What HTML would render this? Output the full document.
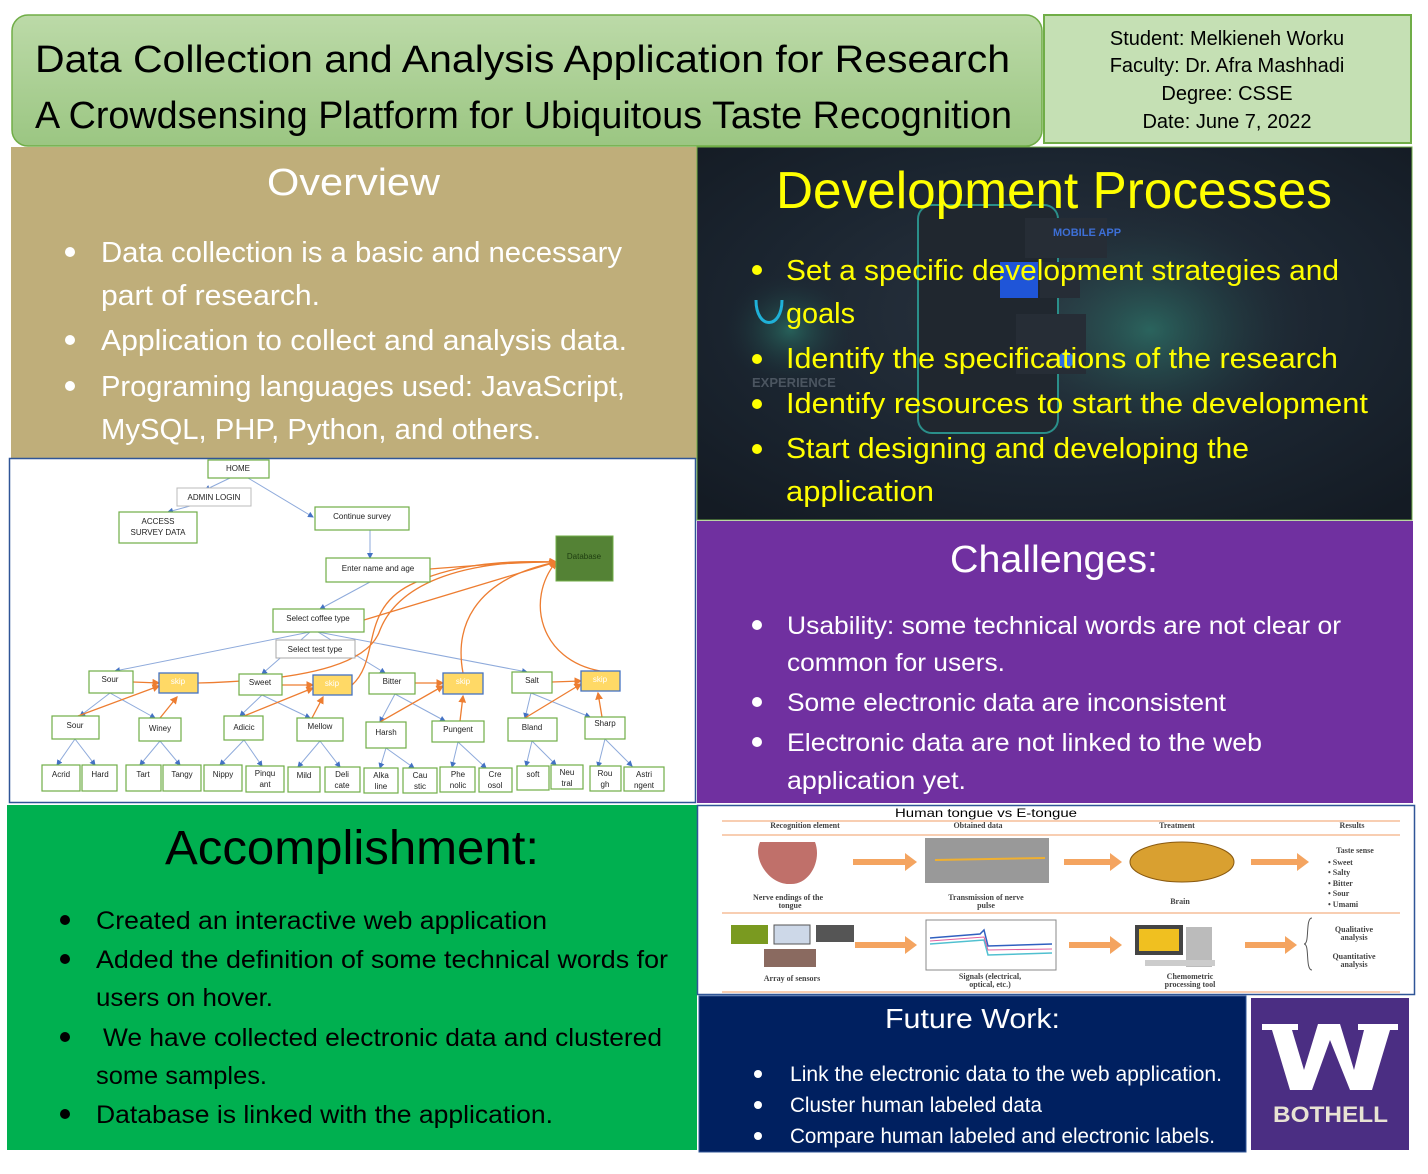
<!DOCTYPE html>
<html><head><meta charset="utf-8"><style>
html,body{margin:0;padding:0;background:#fff;}
svg{display:block;font-family:"Liberation Sans",sans-serif;}
</style></head><body>
<svg width="1428" height="1174" viewBox="0 0 1428 1174" xmlns="http://www.w3.org/2000/svg">
<defs>
<linearGradient id="tg" x1="0" y1="0" x2="0" y2="1"><stop offset="0" stop-color="#bcdaa8"/><stop offset="1" stop-color="#9bc682"/></linearGradient>
<radialGradient id="dv" cx="0.5" cy="0.45" r="0.7"><stop offset="0" stop-color="#2a3440"/><stop offset="0.6" stop-color="#1b2530"/><stop offset="1" stop-color="#141b24"/></radialGradient>
<radialGradient id="tl" cx="0.5" cy="0.5" r="0.5"><stop offset="0" stop-color="#2f8f7a" stop-opacity="0.55"/><stop offset="1" stop-color="#1b2530" stop-opacity="0"/></radialGradient>
<marker id="ab" markerWidth="6" markerHeight="6" refX="5" refY="3" orient="auto"><path d="M0,0 L6,3 L0,6z" fill="#4472c4"/></marker>
<marker id="ao" markerWidth="6" markerHeight="6" refX="5" refY="3" orient="auto"><path d="M0,0 L6,3 L0,6z" fill="#ed7d31"/></marker>
</defs>

<!-- Title -->
<rect x="12" y="15" width="1030" height="131" rx="16" fill="url(#tg)" stroke="#70ad47" stroke-width="1.5"/>
<text x="35" y="72" font-size="38" fill="#000" textLength="975" lengthAdjust="spacingAndGlyphs">Data Collection and Analysis Application for Research</text>
<text x="35" y="128" font-size="38" fill="#000" textLength="977" lengthAdjust="spacingAndGlyphs">A Crowdsensing Platform for Ubiquitous Taste Recognition</text>

<!-- Student -->
<rect x="1044" y="15" width="367" height="128" fill="#c5e0b4" stroke="#70ad47" stroke-width="2"/>
<g font-size="20" fill="#000" text-anchor="middle">
<text x="1227" y="45">Student: Melkieneh Worku</text>
<text x="1227" y="72">Faculty: Dr. Afra Mashhadi</text>
<text x="1227" y="100">Degree: CSSE</text>
<text x="1227" y="128">Date: June 7, 2022</text>
</g>

<!-- Overview -->
<rect x="11" y="147" width="686" height="312" fill="#bfae7a"/>
<text x="267" y="195" font-size="38" fill="#fff" textLength="173" lengthAdjust="spacingAndGlyphs">Overview</text>
<g fill="#fff" font-size="29">
<circle cx="70" cy="252" r="5"/><circle cx="70" cy="340" r="5"/><circle cx="70" cy="386" r="5"/>
<text x="101" y="262" textLength="521" lengthAdjust="spacingAndGlyphs">Data collection is a basic and necessary</text>
<text x="101" y="305" textLength="219" lengthAdjust="spacingAndGlyphs">part of research.</text>
<text x="101" y="350" textLength="526" lengthAdjust="spacingAndGlyphs">Application to collect and analysis data.</text>
<text x="101" y="396" textLength="524" lengthAdjust="spacingAndGlyphs">Programing languages used: JavaScript,</text>
<text x="101" y="439" textLength="440" lengthAdjust="spacingAndGlyphs">MySQL, PHP, Python, and others.</text>
</g>

<!-- Flowchart -->
<rect x="9.5" y="458.5" width="686" height="344" fill="#fff" stroke="#2f5597" stroke-width="1.5"/>
<g stroke="#8eaadb" stroke-width="1" fill="none" marker-end="url(#ab)">
<path d="M230,478 L205,490"/><path d="M190,506 L168,512"/><path d="M248,478 L313,517"/>
<path d="M370,530 L370,558"/><path d="M370,582 L320,609"/>
<path d="M310,632 L115,671"/><path d="M310,632 L262,674"/><path d="M318,632 L385,673"/><path d="M318,632 L527,672"/>
<path d="M110,693 L80,716"/><path d="M110,693 L155,718"/><path d="M262,695 L240,716"/><path d="M262,695 L310,718"/>
<path d="M395,694 L380,722"/><path d="M395,694 L445,721"/><path d="M531,693 L525,718"/><path d="M531,693 L590,717"/>
<path d="M75,739 L57,765"/><path d="M75,739 L95,765"/><path d="M160,741 L140,765"/><path d="M160,741 L180,765"/>
<path d="M244,740 L220,765"/><path d="M244,740 L262,766"/><path d="M320,741 L298,767"/><path d="M320,741 L340,767"/>
<path d="M386,748 L380,768"/><path d="M386,748 L414,768"/><path d="M458,742 L452,767"/><path d="M458,742 L486,768"/>
<path d="M532,741 L526,766"/><path d="M532,741 L556,765"/><path d="M605,739 L598,767"/><path d="M605,739 L632,766"/>
</g>
<g stroke="#ed7d31" stroke-width="1.3" fill="none" marker-end="url(#ao)">
<path d="M133,682 L159,683"/><path d="M282,685 L313,685"/><path d="M415,683 L443,683"/><path d="M552,682 L581,681"/>
<path d="M78,716 L159,686"/><path d="M160,718 L177,697"/><path d="M244,716 L313,688"/><path d="M312,718 L323,697"/>
<path d="M380,722 L443,686"/><path d="M460,721 L463,696"/><path d="M525,718 L581,684"/><path d="M602,717 L598,693"/>
<path d="M430,569 C480,565 520,562 556,562"/><path d="M364,620 L556,562"/>
<path d="M198,683 C320,680 370,660 380,630 C400,580 470,560 556,562"/>
<path d="M352,685 C380,660 360,610 410,585 C450,565 500,560 556,562"/>
<path d="M463,673 C455,630 470,580 556,562"/>
<path d="M600,671 C540,660 525,600 556,562"/>
</g>
<g font-size="8" fill="#222" text-anchor="middle">
<g fill="#fff" stroke="#70ad47" stroke-width="1.2">
<rect x="208" y="460" width="61" height="18"/><rect x="119" y="512" width="78" height="31"/><rect x="315" y="507" width="94" height="23"/>
<rect x="326" y="558" width="104" height="24"/><rect x="273" y="609" width="91" height="23"/>
<rect x="89" y="671" width="44" height="22"/><rect x="239" y="674" width="43" height="21"/><rect x="369" y="673" width="46" height="21"/><rect x="512" y="672" width="40" height="21"/>
<rect x="52" y="716" width="47" height="23"/><rect x="139" y="718" width="42" height="23"/><rect x="224" y="716" width="39" height="24"/><rect x="297" y="718" width="46" height="23"/>
<rect x="366" y="722" width="40" height="26"/><rect x="432" y="721" width="52" height="21"/><rect x="508" y="718" width="49" height="23"/><rect x="585" y="717" width="40" height="22"/>
<rect x="42" y="765" width="38" height="26"/><rect x="82" y="765" width="35" height="26"/><rect x="126" y="765" width="35" height="26"/><rect x="163" y="765" width="38" height="26"/>
<rect x="204" y="765" width="38" height="26"/><rect x="246" y="766" width="38" height="26"/><rect x="288" y="767" width="32" height="25"/><rect x="325" y="767" width="35" height="25"/>
<rect x="364" y="768" width="34" height="25"/><rect x="403" y="768" width="34" height="25"/><rect x="440" y="767" width="35" height="25"/><rect x="479" y="768" width="33" height="24"/>
<rect x="517" y="766" width="32" height="24"/><rect x="551" y="765" width="32" height="24"/><rect x="590" y="766" width="31" height="25"/><rect x="624" y="767" width="40" height="24"/>
</g>
<rect x="177" y="488" width="74" height="18" fill="#fff" stroke="#bbb"/><rect x="276" y="640" width="79" height="18" fill="#fff" stroke="#aaa"/>
<rect x="556" y="536" width="57" height="45" fill="#548235" stroke="#70ad47"/>
<g fill="#ffd966" stroke="#4472c4" stroke-width="1.3"><rect x="159" y="673" width="39" height="20"/><rect x="313" y="675" width="39" height="20"/><rect x="443" y="673" width="40" height="21"/><rect x="581" y="671" width="39" height="20"/></g>
<text x="238" y="471">HOME</text><text x="214" y="500">ADMIN LOGIN</text><text x="158" y="524">ACCESS</text><text x="158" y="535">SURVEY DATA</text>
<text x="362" y="519">Continue survey</text><text x="378" y="571">Enter name and age</text><text x="318" y="621">Select coffee type</text><text x="315" y="652">Select test type</text>
<text x="584" y="559" fill="#1e3d10">Database</text>
<text x="110" y="682">Sour</text><text x="260" y="685">Sweet</text><text x="392" y="684">Bitter</text><text x="532" y="683">Salt</text>
<g fill="#fff"><text x="178" y="684">skip</text><text x="332" y="686">skip</text><text x="463" y="684">skip</text><text x="600" y="682">skip</text></g>
<text x="75" y="728">Sour</text><text x="160" y="731">Winey</text><text x="244" y="730">Adicic</text><text x="320" y="729">Mellow</text>
<text x="386" y="735">Harsh</text><text x="458" y="732">Pungent</text><text x="532" y="730">Bland</text><text x="605" y="726">Sharp</text>
<text x="61" y="777">Acrid</text><text x="100" y="777">Hard</text><text x="143" y="777">Tart</text><text x="182" y="777">Tangy</text><text x="223" y="777">Nippy</text>
<text x="265" y="776">Pinqu</text><text x="265" y="787">ant</text><text x="304" y="778">Mild</text><text x="342" y="777">Deli</text><text x="342" y="788">cate</text>
<text x="381" y="778">Alka</text><text x="381" y="789">line</text><text x="420" y="778">Cau</text><text x="420" y="789">stic</text><text x="458" y="777">Phe</text><text x="458" y="788">nolic</text>
<text x="495" y="777">Cre</text><text x="495" y="788">osol</text><text x="533" y="777">soft</text><text x="567" y="775">Neu</text><text x="567" y="786">tral</text>
<text x="605" y="776">Rou</text><text x="605" y="787">gh</text><text x="644" y="777">Astri</text><text x="644" y="788">ngent</text>
</g>

<!-- Development -->
<rect x="697" y="147" width="715" height="373" fill="url(#dv)" stroke="#70ad47" stroke-width="1"/>
<ellipse cx="1150" cy="330" rx="170" ry="130" fill="url(#tl)"/>
<ellipse cx="790" cy="330" rx="70" ry="60" fill="url(#tl)"/>
<rect x="918" y="205" width="140" height="228" rx="14" fill="#20272f" stroke="#2a8f8a" stroke-width="2"/>
<rect x="1025" y="218" width="82" height="40" fill="#262d36"/>
<text x="1053" y="236" font-size="11" font-weight="bold" fill="#3d6fd6">MOBILE APP</text>
<rect x="1000" y="262" width="38" height="36" fill="#1f55d8"/>
<rect x="1040" y="262" width="40" height="36" fill="#262d36"/>
<rect x="1016" y="314" width="70" height="60" fill="#262d36"/>
<circle cx="1066" cy="360" r="8" fill="#2d6fe0"/>
<path d="M756,300 C756,330 782,330 782,300" stroke="#1fb1d8" stroke-width="3" fill="none"/>
<text x="752" y="387" font-size="13" font-weight="bold" fill="#4b5560">EXPERIENCE</text>
<text x="776" y="208" font-size="52" fill="#ffff00" textLength="556" lengthAdjust="spacingAndGlyphs">Development Processes</text>
<g fill="#ffff00" font-size="29">
<circle cx="757" cy="270" r="5"/><circle cx="757" cy="359" r="5"/><circle cx="757" cy="404" r="5"/><circle cx="757" cy="449" r="5"/>
<text x="786" y="280" textLength="553" lengthAdjust="spacingAndGlyphs">Set a specific development strategies and</text>
<text x="786" y="323" textLength="69" lengthAdjust="spacingAndGlyphs">goals</text>
<text x="786" y="368" textLength="552" lengthAdjust="spacingAndGlyphs">Identify the specifications of the research</text>
<text x="786" y="413" textLength="582" lengthAdjust="spacingAndGlyphs">Identify resources to start the development</text>
<text x="786" y="458" textLength="463" lengthAdjust="spacingAndGlyphs">Start designing and developing the</text>
<text x="786" y="501" textLength="148" lengthAdjust="spacingAndGlyphs">application</text>
</g>

<!-- Challenges -->
<rect x="697" y="521" width="716" height="282" fill="#7030a0"/>
<text x="950" y="572" font-size="38" fill="#fff" textLength="208" lengthAdjust="spacingAndGlyphs">Challenges:</text>
<g fill="#fff" font-size="25">
<circle cx="757" cy="625" r="5"/><circle cx="757" cy="702" r="5"/><circle cx="757" cy="742" r="5"/>
<text x="787" y="634" textLength="554" lengthAdjust="spacingAndGlyphs">Usability: some technical words are not clear or</text>
<text x="787" y="671" textLength="218" lengthAdjust="spacingAndGlyphs">common for users.</text>
<text x="787" y="711" textLength="439" lengthAdjust="spacingAndGlyphs">Some electronic data are inconsistent</text>
<text x="787" y="751" textLength="475" lengthAdjust="spacingAndGlyphs">Electronic data are not linked to the web</text>
<text x="787" y="789" textLength="179" lengthAdjust="spacingAndGlyphs">application yet.</text>
</g>

<!-- Accomplishment -->
<rect x="7" y="805" width="690" height="345" fill="#00b050"/>
<text x="165" y="864" font-size="48" fill="#000" textLength="374" lengthAdjust="spacingAndGlyphs">Accomplishment:</text>
<g fill="#000" font-size="25">
<circle cx="65" cy="920" r="5"/><circle cx="65" cy="959" r="5"/><circle cx="65" cy="1037" r="5"/><circle cx="65" cy="1114" r="5"/>
<text x="96" y="929" textLength="451" lengthAdjust="spacingAndGlyphs">Created an interactive web application</text>
<text x="96" y="968" textLength="572" lengthAdjust="spacingAndGlyphs">Added the definition of some technical words for</text>
<text x="96" y="1006" textLength="177" lengthAdjust="spacingAndGlyphs">users on hover.</text>
<text x="103" y="1046" textLength="559" lengthAdjust="spacingAndGlyphs">We have collected electronic data and clustered</text>
<text x="96" y="1084" textLength="171" lengthAdjust="spacingAndGlyphs">some samples.</text>
<text x="96" y="1123" textLength="457" lengthAdjust="spacingAndGlyphs">Database is linked with the application.</text>
</g>

<!-- Tongue diagram -->
<rect x="697.5" y="805.5" width="717" height="189" fill="#fff" stroke="#2f5597" stroke-width="1.5"/>
<g stroke="#f4b183" stroke-width="1.2"><line x1="722" y1="821" x2="1400" y2="821"/><line x1="722" y1="835" x2="1400" y2="835"/><line x1="722" y1="913" x2="1400" y2="913"/><line x1="722" y1="992" x2="1400" y2="992"/></g>
<text x="895" y="817" font-size="12" fill="#000" textLength="182" lengthAdjust="spacingAndGlyphs">Human tongue vs E-tongue</text>
<g font-family="Liberation Serif,serif" font-size="8" fill="#444" text-anchor="middle" font-weight="bold">
<text x="805" y="828">Recognition element</text><text x="978" y="828">Obtained data</text><text x="1177" y="828">Treatment</text><text x="1352" y="828">Results</text>
<text x="788" y="900">Nerve endings of the</text><text x="790" y="908">tongue</text><text x="986" y="900">Transmission of nerve</text><text x="986" y="908">pulse</text><text x="1180" y="904">Brain</text>
<text x="792" y="981">Array of sensors</text><text x="990" y="979">Signals (electrical,</text><text x="990" y="987">optical, etc.)</text><text x="1190" y="979">Chemometric</text><text x="1190" y="987">processing tool</text>
<text x="1354" y="932">Qualitative</text><text x="1354" y="940">analysis</text><text x="1354" y="959">Quantitative</text><text x="1354" y="967">analysis</text>
<text x="1355" y="853">Taste sense</text>
</g>
<g font-family="Liberation Serif,serif" font-size="8" fill="#444" font-weight="bold"><text x="1328" y="865">• Sweet</text><text x="1328" y="875">• Salty</text><text x="1328" y="886">• Bitter</text><text x="1328" y="896">• Sour</text><text x="1328" y="907">• Umami</text></g>
<path d="M760,842 C752,860 770,885 790,884 C810,885 822,860 815,842 Z" fill="#c0706a"/>
<rect x="925" y="838" width="124" height="45" fill="#999"/><path d="M935,860 L1045,858" stroke="#f0b030" stroke-width="2"/>
<ellipse cx="1182" cy="862" rx="52" ry="20" fill="#d9a030" stroke="#8a5a10"/>
<rect x="731" y="925" width="37" height="19" fill="#7a9a20"/><rect x="774" y="925" width="36" height="19" fill="#cdd8e8" stroke="#555"/><rect x="816" y="925" width="38" height="17" fill="#555"/><rect x="764" y="949" width="52" height="18" fill="#8a6a60"/>
<rect x="926" y="920" width="130" height="50" fill="#fff" stroke="#888"/>
<path d="M930,938 L980,934 L984,930 L988,946 L1052,944" stroke="#3060c0" fill="none" stroke-width="1.5"/><path d="M930,944 L984,940 L988,955 L1052,953" stroke="#50c0d0" fill="none" stroke-width="1.5"/><path d="M930,941 L984,937 L988,950 L1052,949" stroke="#e060a0" fill="none" stroke-width="1"/>
<rect x="1135" y="925" width="48" height="30" fill="#444"/><rect x="1139" y="929" width="40" height="22" fill="#f0c020"/><rect x="1186" y="927" width="26" height="40" fill="#bbb"/><rect x="1145" y="960" width="70" height="6" fill="#ccc"/>
<g fill="#f4a460"><path d="M853,859 L905,859 L905,853 L917,862 L905,871 L905,865 L853,865Z"/><path d="M1064,859 L1110,859 L1110,853 L1122,862 L1110,871 L1110,865 L1064,865Z"/><path d="M1251,859 L1297,859 L1297,853 L1309,862 L1297,871 L1297,865 L1251,865Z"/>
<path d="M855,942 L905,942 L905,936 L917,945 L905,954 L905,948 L855,948Z"/><path d="M1069,942 L1110,942 L1110,936 L1122,945 L1110,954 L1110,948 L1069,948Z"/><path d="M1245,942 L1285,942 L1285,936 L1297,945 L1285,954 L1285,948 L1245,948Z"/></g>
<path d="M1312,918 C1305,918 1310,944 1304,944 C1310,944 1305,970 1312,970" stroke="#555" fill="none"/>

<!-- Future work -->
<rect x="699" y="996" width="547" height="156" fill="#002060" stroke="#2f5597"/>
<text x="885" y="1028" font-size="28" fill="#fff" textLength="175" lengthAdjust="spacingAndGlyphs">Future Work:</text>
<g fill="#fff" font-size="21">
<circle cx="758" cy="1074" r="4"/><circle cx="758" cy="1105" r="4"/><circle cx="758" cy="1136" r="4"/>
<text x="790" y="1081" textLength="432" lengthAdjust="spacingAndGlyphs">Link the electronic data to the web application.</text>
<text x="790" y="1112" textLength="252" lengthAdjust="spacingAndGlyphs">Cluster human labeled data</text>
<text x="790" y="1143" textLength="425" lengthAdjust="spacingAndGlyphs">Compare human labeled and electronic labels.</text>
</g>

<!-- Logo -->
<rect x="1249" y="996" width="162" height="156" fill="#fff"/>
<rect x="1251" y="998" width="158" height="152" fill="#4b2e83"/>
<path d="M1262,1024 L1298,1024 L1298,1030 L1292,1030 L1304,1070 L1318,1024 L1340,1024 L1354,1070 L1364,1030 L1358,1030 L1358,1024 L1398,1024 L1398,1030 L1390,1030 L1372,1090 L1350,1090 L1330,1040 L1312,1090 L1290,1090 L1272,1030 L1262,1030Z" fill="#fff"/>
<text x="1273" y="1122" font-size="22" font-weight="bold" fill="#e8e3d3" textLength="115" lengthAdjust="spacingAndGlyphs">BOTHELL</text>
</svg>
</body></html>
